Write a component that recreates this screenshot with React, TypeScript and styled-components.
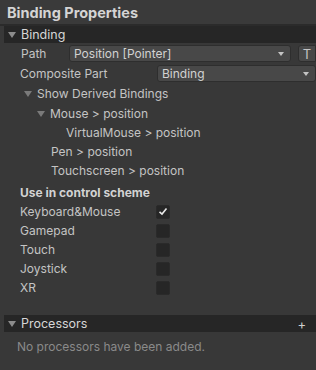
import styled, { createGlobalStyle } from "styled-components";

const Global = createGlobalStyle`
  html, body { margin: 0; padding: 0; background: #383838; }
  body { font-family: Inter, "Noto Sans", sans-serif; color: #c4c4c4; font-size: 12px; }
`;

const Panel = styled.div`
  width: 316px;
  height: 370px;
  background: #383838;
  overflow: hidden;
  display: flex;
  flex-direction: column;
`;

const TitleBar = styled.div`
  height: 24px;
  padding-left: 7px;
  display: flex;
  align-items: center;
  font-size: 14.5px;
  font-weight: 700;
  color: #d4d4d4;
  background: #3a3a3a;
  border-bottom: 2px solid #2b2b2b;
`;

const SectionHeader = styled.div<{ $top?: number }>`
  height: 17px;
  margin-left: 4px;
  margin-top: ${(p) => p.$top ?? 0}px;
  background: #262626;
  display: flex;
  align-items: center;
  color: #d6d6d6;
  font-size: 12.5px;
  gap: 5px;
  padding-left: 4px;
`;

const Tri = styled.span<{ $color?: string }>`
  width: 0;
  height: 0;
  border-left: 4px solid transparent;
  border-right: 4px solid transparent;
  border-top: 6px solid ${(p) => p.$color ?? "#8c8c8c"};
  display: inline-block;
`;

const HeaderTitle = styled.span`
  flex: 1;
`;

const Plus = styled.span`
  margin-right: 10px;
  font-size: 13px;
  color: #cfcfcf;
`;

const Row = styled.div<{ $indent: number; $top?: number }>`
  height: 19px;
  display: flex;
  align-items: center;
  padding-left: ${(p) => p.$indent}px;
  margin-top: ${(p) => p.$top ?? 0}px;
  gap: 5px;
`;

const Label = styled.span<{ $w?: number; $bold?: boolean }>`
  width: ${(p) => (p.$w ? `${p.$w}px` : "auto")};
  flex-shrink: 0;
  font-weight: ${(p) => (p.$bold ? 700 : 400)};
  color: ${(p) => (p.$bold ? "#d2d2d2" : "#c4c4c4")};
`;

const Dropdown = styled.div`
  flex: 1;
  height: 17px;
  background: #484848;
  border: 1px solid #2e2e2e;
  border-radius: 3px;
  box-sizing: border-box;
  display: flex;
  align-items: center;
  padding: 0 6px 0 4px;
  color: #d2d2d2;
`;

const DropText = styled.span`
  flex: 1;
`;

const Caret = styled.span`
  width: 0;
  height: 0;
  border-left: 3.5px solid transparent;
  border-right: 3.5px solid transparent;
  border-top: 4px solid #c4c4c4;
`;

const TButton = styled.div`
  width: 18px;
  height: 17px;
  margin-left: 2px;
  background: #484848;
  border: 1px solid #2e2e2e;
  border-radius: 3px 0 0 3px;
  box-sizing: border-box;
  display: flex;
  align-items: center;
  justify-content: center;
  color: #c4c4c4;
  font-size: 13px;
`;

const Check = styled.div`
  width: 14px;
  height: 14px;
  background: #262626;
  border: 1px solid #2a2a2a;
  border-radius: 2px;
  box-sizing: border-box;
  display: flex;
  align-items: center;
  justify-content: center;
`;

const Empty = styled.div`
  padding: 7px 0 0 17px;
  color: #8a8a8a;
`;

const schemes = [
  { name: "Keyboard&Mouse", on: true },
  { name: "Gamepad", on: false },
  { name: "Touch", on: false },
  { name: "Joystick", on: false },
  { name: "XR", on: false },
];

export default function App() {
  return (
    <Panel>
      <Global />
      <TitleBar>Binding Properties</TitleBar>
      <SectionHeader>
        <Tri />
        <HeaderTitle>Binding</HeaderTitle>
      </SectionHeader>
      <Row $indent={21} $top={1}>
        <Label $w={43}>Path</Label>
        <Dropdown>
          <DropText>Position [Pointer]</DropText>
          <Caret />
        </Dropdown>
        <TButton>T</TButton>
      </Row>
      <Row $indent={20} $top={1}>
        <Label $w={132}>Composite Part</Label>
        <Dropdown>
          <DropText>Binding</DropText>
          <Caret />
        </Dropdown>
      </Row>
      <Row $indent={24} $top={1}>
        <Tri $color="#7a7a7a" />
        <Label>Show Derived Bindings</Label>
      </Row>
      <Row $indent={37} $top={1}>
        <Tri $color="#7a7a7a" />
        <Label>Mouse &gt; position</Label>
      </Row>
      <Row $indent={66}>
        <Label>VirtualMouse &gt; position</Label>
      </Row>
      <Row $indent={51}>
        <Label>Pen &gt; position</Label>
      </Row>
      <Row $indent={51}>
        <Label>Touchscreen &gt; position</Label>
      </Row>
      <Row $indent={20} $top={3}>
        <Label $bold>Use in control scheme</Label>
      </Row>
      {schemes.map((s) => (
        <Row key={s.name} $indent={20}>
          <Label $w={131}>{s.name}</Label>
          <Check>
            {s.on && (
              <svg width="10" height="9" viewBox="0 0 10 9">
                <path d="M1.5 4.8 L4 7 L8.5 1.5" fill="none" stroke="#e8e8e8" strokeWidth="1.6" />
              </svg>
            )}
          </Check>
        </Row>
      ))}
      <SectionHeader $top={18}>
        <Tri />
        <HeaderTitle>Processors</HeaderTitle>
        <Plus>+</Plus>
      </SectionHeader>
      <Empty>No processors have been added.</Empty>
    </Panel>
  );
}
